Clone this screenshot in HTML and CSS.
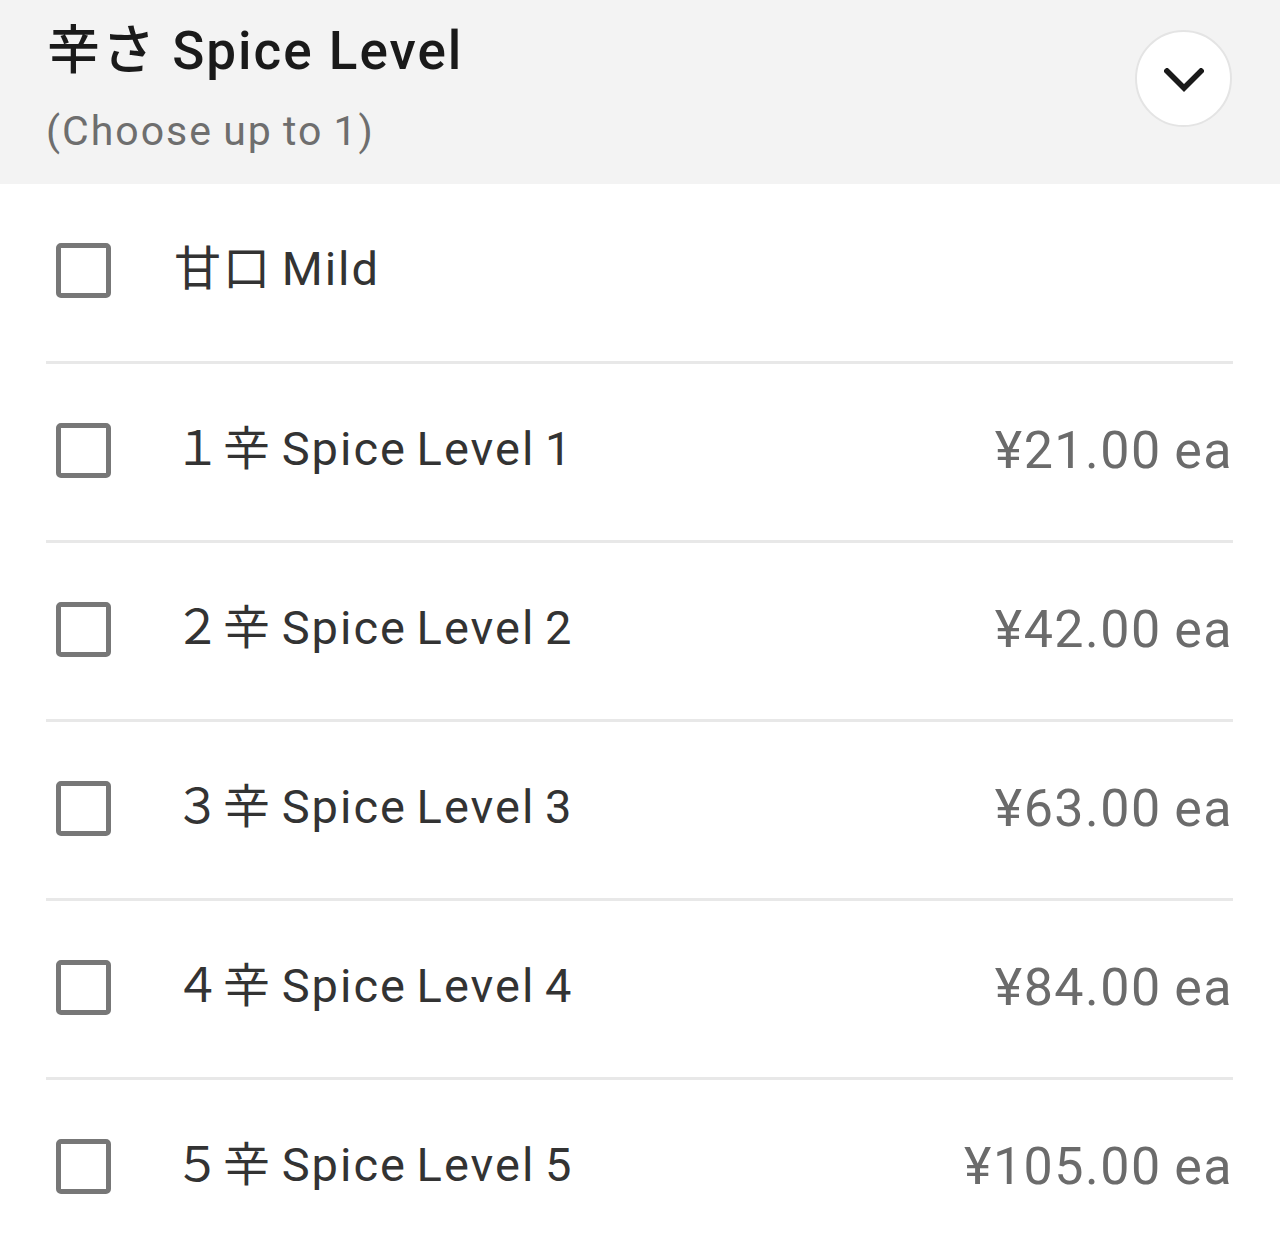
FILE: index.html
```html
<!DOCTYPE html>
<html lang="ja">
<head>
<meta charset="utf-8">
<title>Spice Level</title>
<link rel="stylesheet" href="styles.css">
</head>
<body>
<div class="panel">
  <div class="header">
    <div class="heading">
      <div class="title">辛さ Spice Level</div>
      <div class="subtitle">(Choose up to 1)</div>
    </div>
    <button class="toggle" aria-label="Collapse">
      <svg width="40" height="24" viewBox="0 0 40 24"><path d="M3 3 L20 20 L37 3" fill="none" stroke="#1a1a1a" stroke-width="5.5" stroke-linecap="square"/></svg>
    </button>
  </div>
  <ul class="options">
    <li class="option"><span class="box"></span><span class="label">甘口 Mild</span><span class="price"></span></li>
    <li class="option"><span class="box"></span><span class="label">１辛 Spice Level 1</span><span class="price">¥21.00 ea</span></li>
    <li class="option"><span class="box"></span><span class="label">２辛 Spice Level 2</span><span class="price">¥42.00 ea</span></li>
    <li class="option"><span class="box"></span><span class="label">３辛 Spice Level 3</span><span class="price">¥63.00 ea</span></li>
    <li class="option"><span class="box"></span><span class="label">４辛 Spice Level 4</span><span class="price">¥84.00 ea</span></li>
    <li class="option"><span class="box"></span><span class="label">５辛 Spice Level 5</span><span class="price">¥105.00 ea</span></li>
  </ul>
</div>
</body>
</html>
```

FILE: styles.css
```css
html, body {
  margin: 0;
  padding: 0;
  background: #ffffff;
}
body {
  font-family: "Roboto", "Noto Sans CJK JP", sans-serif;
  color: #222222;
}
.panel {
  width: 1280px;
}
.header {
  height: 184px;
  box-sizing: border-box;
  background: #f3f3f3;
  display: flex;
  justify-content: space-between;
  align-items: flex-start;
  padding: 0 48px 0 47px;
}
.heading {
  display: flex;
  flex-direction: column;
  padding-top: 19px;
}
.title {
  font-size: 53px;
  line-height: 64px;
  font-weight: 500;
  color: #1a1a1a;
  letter-spacing: 2px;
}
.subtitle {
  margin-top: 22px;
  font-size: 41px;
  line-height: 52px;
  color: #6e6e6e;
  margin-left: -1px;
  letter-spacing: 2px;
  word-spacing: -2px;
}
.toggle {
  margin-top: 30px;
  width: 97px;
  height: 97px;
  border-radius: 50%;
  background: #ffffff;
  border: 2px solid #e4e4e4;
  display: flex;
  align-items: center;
  justify-content: center;
  padding: 0;
}
.toggle svg {
  display: block;
  margin-top: 2px;
}
.options {
  list-style: none;
  margin: 0 47px 0 46px;
  padding: 0;
}
.option {
  display: flex;
  align-items: center;
  padding: 0 1px 4px 10px;
  box-sizing: border-box;
  height: 179px;
  border-top: 3px solid #e8e8e8;
}
.option:first-child {
  border-top: none;
  height: 177px;
}
.box {
  width: 55px;
  height: 55px;
  box-sizing: border-box;
  border: 5px solid #777777;
  border-radius: 5px;
  flex: none;
}
.label {
  margin-left: 63px;
  margin-bottom: 12px;
  font-size: 47px;
  color: #333333;
  flex: 1;
  letter-spacing: 2px;
  word-spacing: -4px;
}
.price {
  font-size: 52px;
  color: #6b6b6b;
  text-align: right;
  letter-spacing: 1.5px;
  word-spacing: -2px;
  margin-right: -1px;
}
```
